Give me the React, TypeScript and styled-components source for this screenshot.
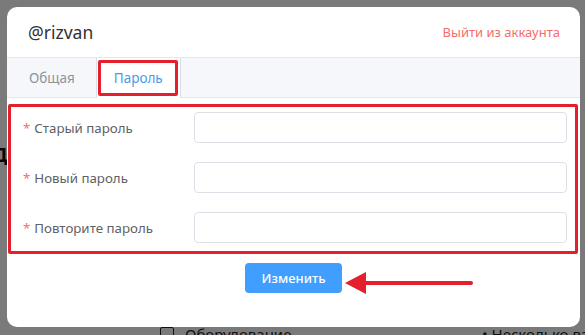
import styled, { createGlobalStyle } from 'styled-components'

const Global = createGlobalStyle`
html, body { margin: 0; padding: 0; }
body { font-family: "Noto Sans", "Open Sans", sans-serif; }
`

//page behind the dialog
const Page = styled.div`
position: relative;
width: 585px;
height: 335px;
overflow: hidden;
background: #fff;
`

const BehindColumn = styled.div`
display: flex;
flex-direction: column;
justify-content: space-between;
height: 100%;
padding-top: 141px;
box-sizing: border-box;
`

const Glyph = styled.span`
font-size: 20px;
font-weight: 700;
margin-left: -8px;
color: #111;
`

const Bottom = styled.div`
display: flex;
align-items: center;
padding-left: 160px;
margin-bottom: -9px;
white-space: nowrap;
`

const BehindRow = styled.div<{ $w?: number }>`
display: flex;
align-items: center;
flex-shrink: 0;
gap: 11px;
width: ${p => (p.$w ? p.$w + 'px' : 'auto')};
font-size: 15px;
color: #222;
`

const Check = styled.span`
display: inline-block;
width: 12px;
height: 12px;
border: 1.5px solid #222;
border-radius: 2px;
`

const Overlay = styled.div`
position: absolute;
inset: 0;
background: rgba(0,0,0,0.52);
padding: 7px 5px 8px 7px;
box-sizing: border-box;
`

const Dialog = styled.div`
background: #fff;
border-radius: 10px;
height: 320px;
overflow: hidden;
display: flex;
flex-direction: column;
`

const Header = styled.div`
height: 50px;
display: flex;
align-items: center;
justify-content: space-between;
padding: 0 20px 0 21px;
`

const Title = styled.span`
font-size: 17.5px;
color: #303133;
`

const Logout = styled.span`
font-size: 13px;
color: #f56c6c;
`

const TabBar = styled.div`
height: 39px;
display: flex;
background: #f5f7fa;
border-top: 1px solid #e4e7ed;
border-bottom: 1px solid #e4e7ed;
padding-left: 1px;
`

const Tab = styled.div<{ $active?: boolean }>`
position: relative;
display: flex;
align-items: center;
padding: 0 20px;
margin-bottom: -1px;
font-size: 13.5px;
color: ${p => (p.$active ? '#4a9ae8' : '#909399')};
background: ${p => (p.$active ? '#fff' : 'transparent')};
border-left: 1px solid ${p => (p.$active ? '#dcdfe6' : 'transparent')};
border-right: 1px solid ${p => (p.$active ? '#dcdfe6' : 'transparent')};
width: ${p => (p.$active ? '85px' : 'auto')};
box-sizing: border-box;
justify-content: ${p => (p.$active ? 'center' : 'flex-start')};
`

const Mark = styled.span`
position: absolute;
left: 1px;
right: 2px;
top: 2px;
bottom: 2px;
border: 3px solid #e3202b;
border-radius: 2px;
`

const Form = styled.form`
margin: 6px 2px 0 1px;
border: 3px solid #e3202b;
border-radius: 2px;
padding: 5px 8px 8px 12px;
display: flex;
flex-direction: column;
gap: 19px;
`

const Row = styled.div`
display: flex;
align-items: center;
height: 31px;
`

const Label = styled.label`
width: 171px;
flex-shrink: 0;
font-size: 13.3px;
color: #606266;
&::before {
  content: '*';
  color: #f56c6c;
  margin-right: 4px;
}
`

const Input = styled.input`
flex: 1;
height: 31px;
box-sizing: border-box;
border: 1px solid #dcdfe6;
border-radius: 4px;
outline: none;
`

const Actions = styled.div`
position: relative;
display: flex;
justify-content: center;
padding-top: 9px;
`

const Button = styled.button`
width: 97px;
height: 30px;
border: none;
border-radius: 4px;
background: #409eff;
color: #fff;
font-family: inherit;
font-size: 13px;
font-weight: 500;
`

const Arrow = styled.svg`
position: absolute;
left: 337px;
top: 17px;
`

const fields = ['Старый пароль', 'Новый пароль', 'Повторите пароль']

export default function App() {
  return (
    <Page>
      <Global />
      <BehindColumn>
        <Glyph>Д</Glyph>
        <Bottom>
          <BehindRow $w={322}><Check />Оборудование</BehindRow>
          <BehindRow>• Несколько вар</BehindRow>
        </Bottom>
      </BehindColumn>
      <Overlay>
        <Dialog>
          <Header>
            <Title>@rizvan</Title>
            <Logout>Выйти из аккаунта</Logout>
          </Header>
          <TabBar>
            <Tab>Общая</Tab>
            <Tab $active>Пароль<Mark /></Tab>
          </TabBar>
          <Form>
            {fields.map(f => (
              <Row key={f}>
                <Label>{f}</Label>
                <Input type="password" />
              </Row>
            ))}
          </Form>
          <Actions>
            <Button type="button">Изменить</Button>
            <Arrow width="130" height="24" viewBox="0 0 130 24">
              <path d="M1 12 L22 1 L22 23 Z" fill="#e3202b" />
              <line x1="20" y1="12" x2="127" y2="12" stroke="#e3202b" strokeWidth="4" strokeLinecap="round" />
            </Arrow>
          </Actions>
        </Dialog>
      </Overlay>
    </Page>
  )
}
